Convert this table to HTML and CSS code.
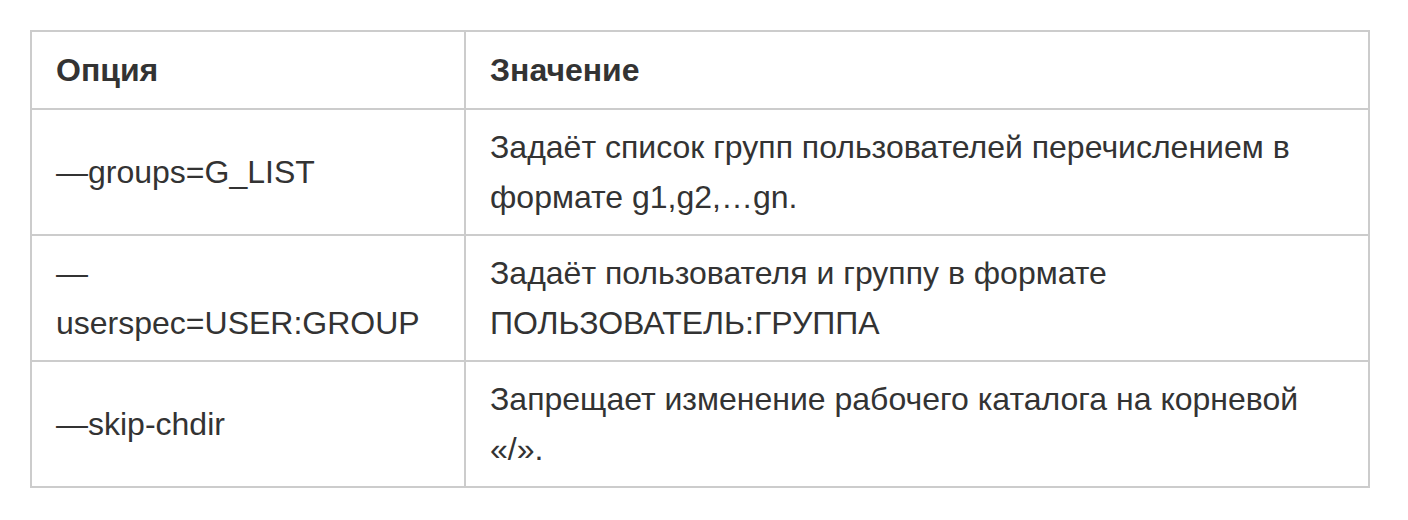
FILE: index.html
```html
<!DOCTYPE html>
<html lang="ru">
<head>
<meta charset="utf-8">
<title>Опции</title>
<link rel="stylesheet" href="styles.css">
</head>
<body>
<table class="opts">
  <colgroup>
    <col class="col-opt">
    <col class="col-val">
  </colgroup>
  <thead>
    <tr>
      <th>Опция</th>
      <th>Значение</th>
    </tr>
  </thead>
  <tbody>
    <tr>
      <td>—groups=G_LIST</td>
      <td>Задаёт список групп пользователей перечислением в формате g1,g2,…gn.</td>
    </tr>
    <tr>
      <td>—userspec=USER:GROUP</td>
      <td>Задаёт пользователя и группу в формате ПОЛЬЗОВАТЕЛЬ:ГРУППА</td>
    </tr>
    <tr>
      <td>—skip-chdir</td>
      <td>Запрещает изменение рабочего каталога на корневой «/».</td>
    </tr>
  </tbody>
</table>
</body>
</html>
```
FILE: styles.css
```css
html, body {
  margin: 0;
  padding: 0;
  background: #ffffff;
}
body {
  padding: 30px;
  font-family: "Liberation Sans", Arial, sans-serif;
  font-size: 32px;
  line-height: 50px;
  color: #333333;
}
.opts {
  border-collapse: collapse;
  width: 1340px;
  table-layout: fixed;
}
.col-opt { width: 434px; }
.opts th,
.opts td {
  border: 2px solid #cccccc;
  padding: 12px 24px;
  text-align: left;
  vertical-align: middle;
}
.opts th {
  font-weight: bold;
  padding-top: 13px;
  padding-bottom: 13px;
}
```
